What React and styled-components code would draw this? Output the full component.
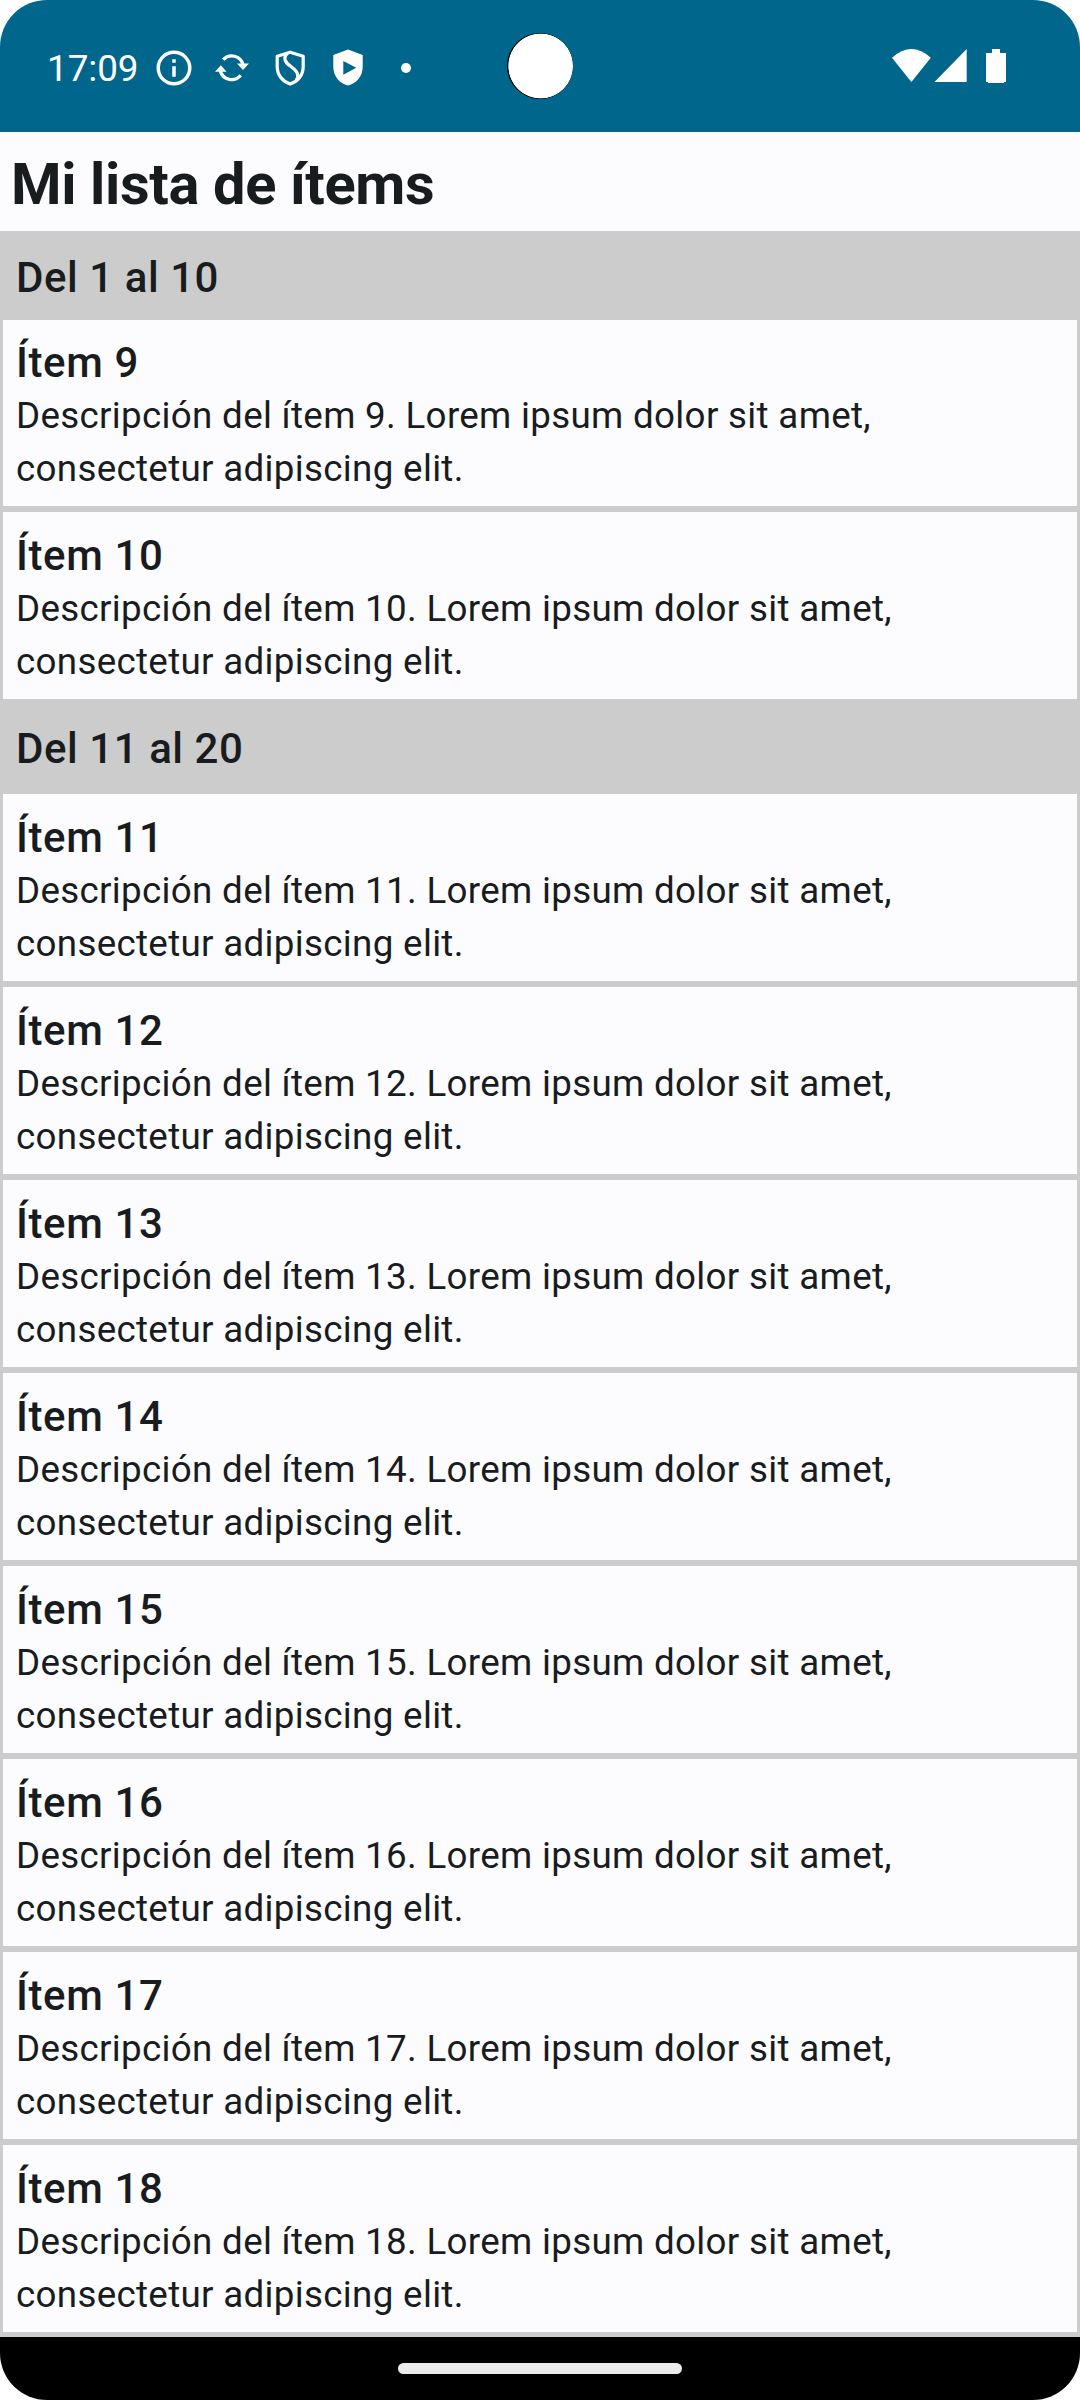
import React from "react";
import styled, { createGlobalStyle } from "styled-components";

const Global = createGlobalStyle`
  html, body { margin: 0; padding: 0; background: #fff; }
  body { font-family: Roboto, "Noto Sans", sans-serif; color: #191c1e; }
`;

const Screen = styled.div`
  display: flex;
  flex-direction: column;
  width: 1080px;
  height: 2400px;
  overflow: hidden;
  border-radius: 47px;
  background: #fcfcff;
`;

const StatusBar = styled.header`
  position: relative;
  display: flex;
  flex: none;
  justify-content: space-between;
  box-sizing: border-box;
  height: 132px;
  padding: 3px 72px 0 47px;
  background: #00668b;
  color: #fff;
`;

const StatusGroup = styled.div`
  display: flex;
  align-items: center;
`;

const Clock = styled.time`
  width: 98px;
  padding-top: 2px;
  font-size: 36.75px;
  line-height: 44px;
`;

const StatusIcon = styled.svg`
  display: block;
  flex: none;
  width: ${(p) => p.$w}px;
  height: ${(p) => p.$h || p.$w}px;
  margin-left: ${(p) => p.$gap || 0}px;
`;

const Camera = styled.div`
  position: absolute;
  top: 33px;
  left: 507px;
  width: 66px;
  height: 66px;
  border-radius: 50%;
  background: radial-gradient(circle at 33.7px 33px, #fff 32px, #000 32.7px);
`;

const Title = styled.h1`
  flex: none;
  box-sizing: border-box;
  height: 99px;
  margin: 0;
  padding: 16px 11px 0;
  font-size: 57.75px;
  font-weight: 700;
  line-height: 73px;
  letter-spacing: -0.36px;
`;

const List = styled.main`
  flex: 1;
  min-height: 0;
  overflow: hidden;
  background: #fcfcff;
`;

const GroupHeader = styled.h2`
  position: relative;
  z-index: 1;
  box-sizing: border-box;
  height: 89px;
  margin: 0;
  padding: 15px 16px 11px;
  background: #ccc;
  font-size: 42px;
  font-weight: 500;
  line-height: 63px;
  letter-spacing: 0.56px;
`;

const Item = styled.article`
  box-sizing: border-box;
  height: 193px;
  margin-top: ${(p) => (p.$tucked ? -4 : 0)}px;
  padding: 12px 13px 8px;
  border: 3px solid #ccc;
`;

const ItemTitle = styled.h3`
  margin: 0;
  font-size: 42px;
  font-weight: 500;
  line-height: 63px;
  letter-spacing: 0.6px;
`;

const Description = styled.p`
  margin: -5px 0 0;
  font-size: 36.75px;
  line-height: 53px;
  letter-spacing: 0.31px;
`;

const ListEnd = styled.div`
  height: 2px;
  background: #ccc;
`;

const NavigationBar = styled.footer`
  display: flex;
  flex: none;
  justify-content: center;
  height: 63px;
  background: #000;
`;

const HomeHandle = styled.div`
  width: 284px;
  height: 11px;
  margin-top: 26px;
  border-radius: 6px;
  background: #ebebeb;
`;

const groups = [
  { label: "Del 1 al 10", items: [9, 10] },
  { label: "Del 11 al 20", items: [11, 12, 13, 14, 15, 16, 17, 18] },
];

export default function App() {
  return (
    <>
      <Global />
      <Screen>
        <StatusBar>
          <StatusGroup>
            <Clock>17:09</Clock>
            <StatusIcon $w={42} $gap={8} viewBox="0 0 24 24" fill="#fff">
              <path d="M11 7h2v2h-2zM11 11h2v6h-2zM12 2a10 10 0 1 0 0 20 10 10 0 0 0 0-20zm0 18a8 8 0 1 1 0-16 8 8 0 0 1 0 16z" />
            </StatusIcon>
            <StatusIcon $w={42} $gap={16} viewBox="0 0 42 42" fill="#fff">
              <path
                d="M12.200 12.600A11.700 11.700 0 0 1 32 17.500M9.300 24A11.700 11.700 0 0 0 29.700 28.200"
                fill="none"
                stroke="#fff"
                strokeWidth="3.300"
              />
              <path d="M26 16.500H38L32 23Z" />
              <path d="M4 24.800H15.600L9.800 18.300Z" />
            </StatusIcon>
            <StatusIcon
              $w={42}
              $gap={16}
              viewBox="0 0 42 42"
              fill="none"
              stroke="#fff"
              strokeWidth="3.200"
              strokeLinejoin="round"
            >
              <path d="M21.200 5.200 34.200 9.300V19.500C34.200 28 29 34.500 21.200 37 13.400 34.500 8.200 28 8.200 19.500V9.300Z" />
              <path d="M18.500 6C13.500 11 16 15.500 22 19.500 28 24 31 28 27 33.500" />
            </StatusIcon>
            <StatusIcon $w={42} $gap={16} viewBox="0 0 42 42" fill="#fff">
              <path
                fillRule="evenodd"
                d="M21 2.500 35.700 8V20C35.700 29 29.500 36.500 21 38.500 12.500 36.500 6.300 29 6.300 20V8ZM16.300 14V27.700L29.200 20.800Z"
              />
            </StatusIcon>
            <StatusIcon $w={10} $gap={32} viewBox="0 0 10 10" fill="#fff">
              <circle cx="5" cy="5" r="5" />
            </StatusIcon>
          </StatusGroup>
          <Camera />
          <StatusGroup>
            <StatusIcon $w={116} $h={39} viewBox="0 0 116 39" fill="#fff">
              <path d="M0 9.700Q19.400-7.700 38.800 9.700L19.400 34Z" />
              <path d="M74.700 1V34H42.500Z" />
              <path d="M100 1h8v4h6v29h-2v1H96v-1h-2V5h6z" />
            </StatusIcon>
          </StatusGroup>
        </StatusBar>
        <Title>Mi lista de ítems</Title>
        <List>
          {groups.map((group) => (
            <React.Fragment key={group.label}>
              <GroupHeader>{group.label}</GroupHeader>
              {group.items.map((n) => (
                <Item key={n} $tucked={n === 9}>
                  <ItemTitle>Ítem {n}</ItemTitle>
                  <Description>
                    Descripción del ítem {n}. Lorem ipsum dolor sit amet,
                    <br />
                    consectetur adipiscing elit.
                  </Description>
                </Item>
              ))}
            </React.Fragment>
          ))}
          <ListEnd />
        </List>
        <NavigationBar>
          <HomeHandle />
        </NavigationBar>
      </Screen>
    </>
  );
}
